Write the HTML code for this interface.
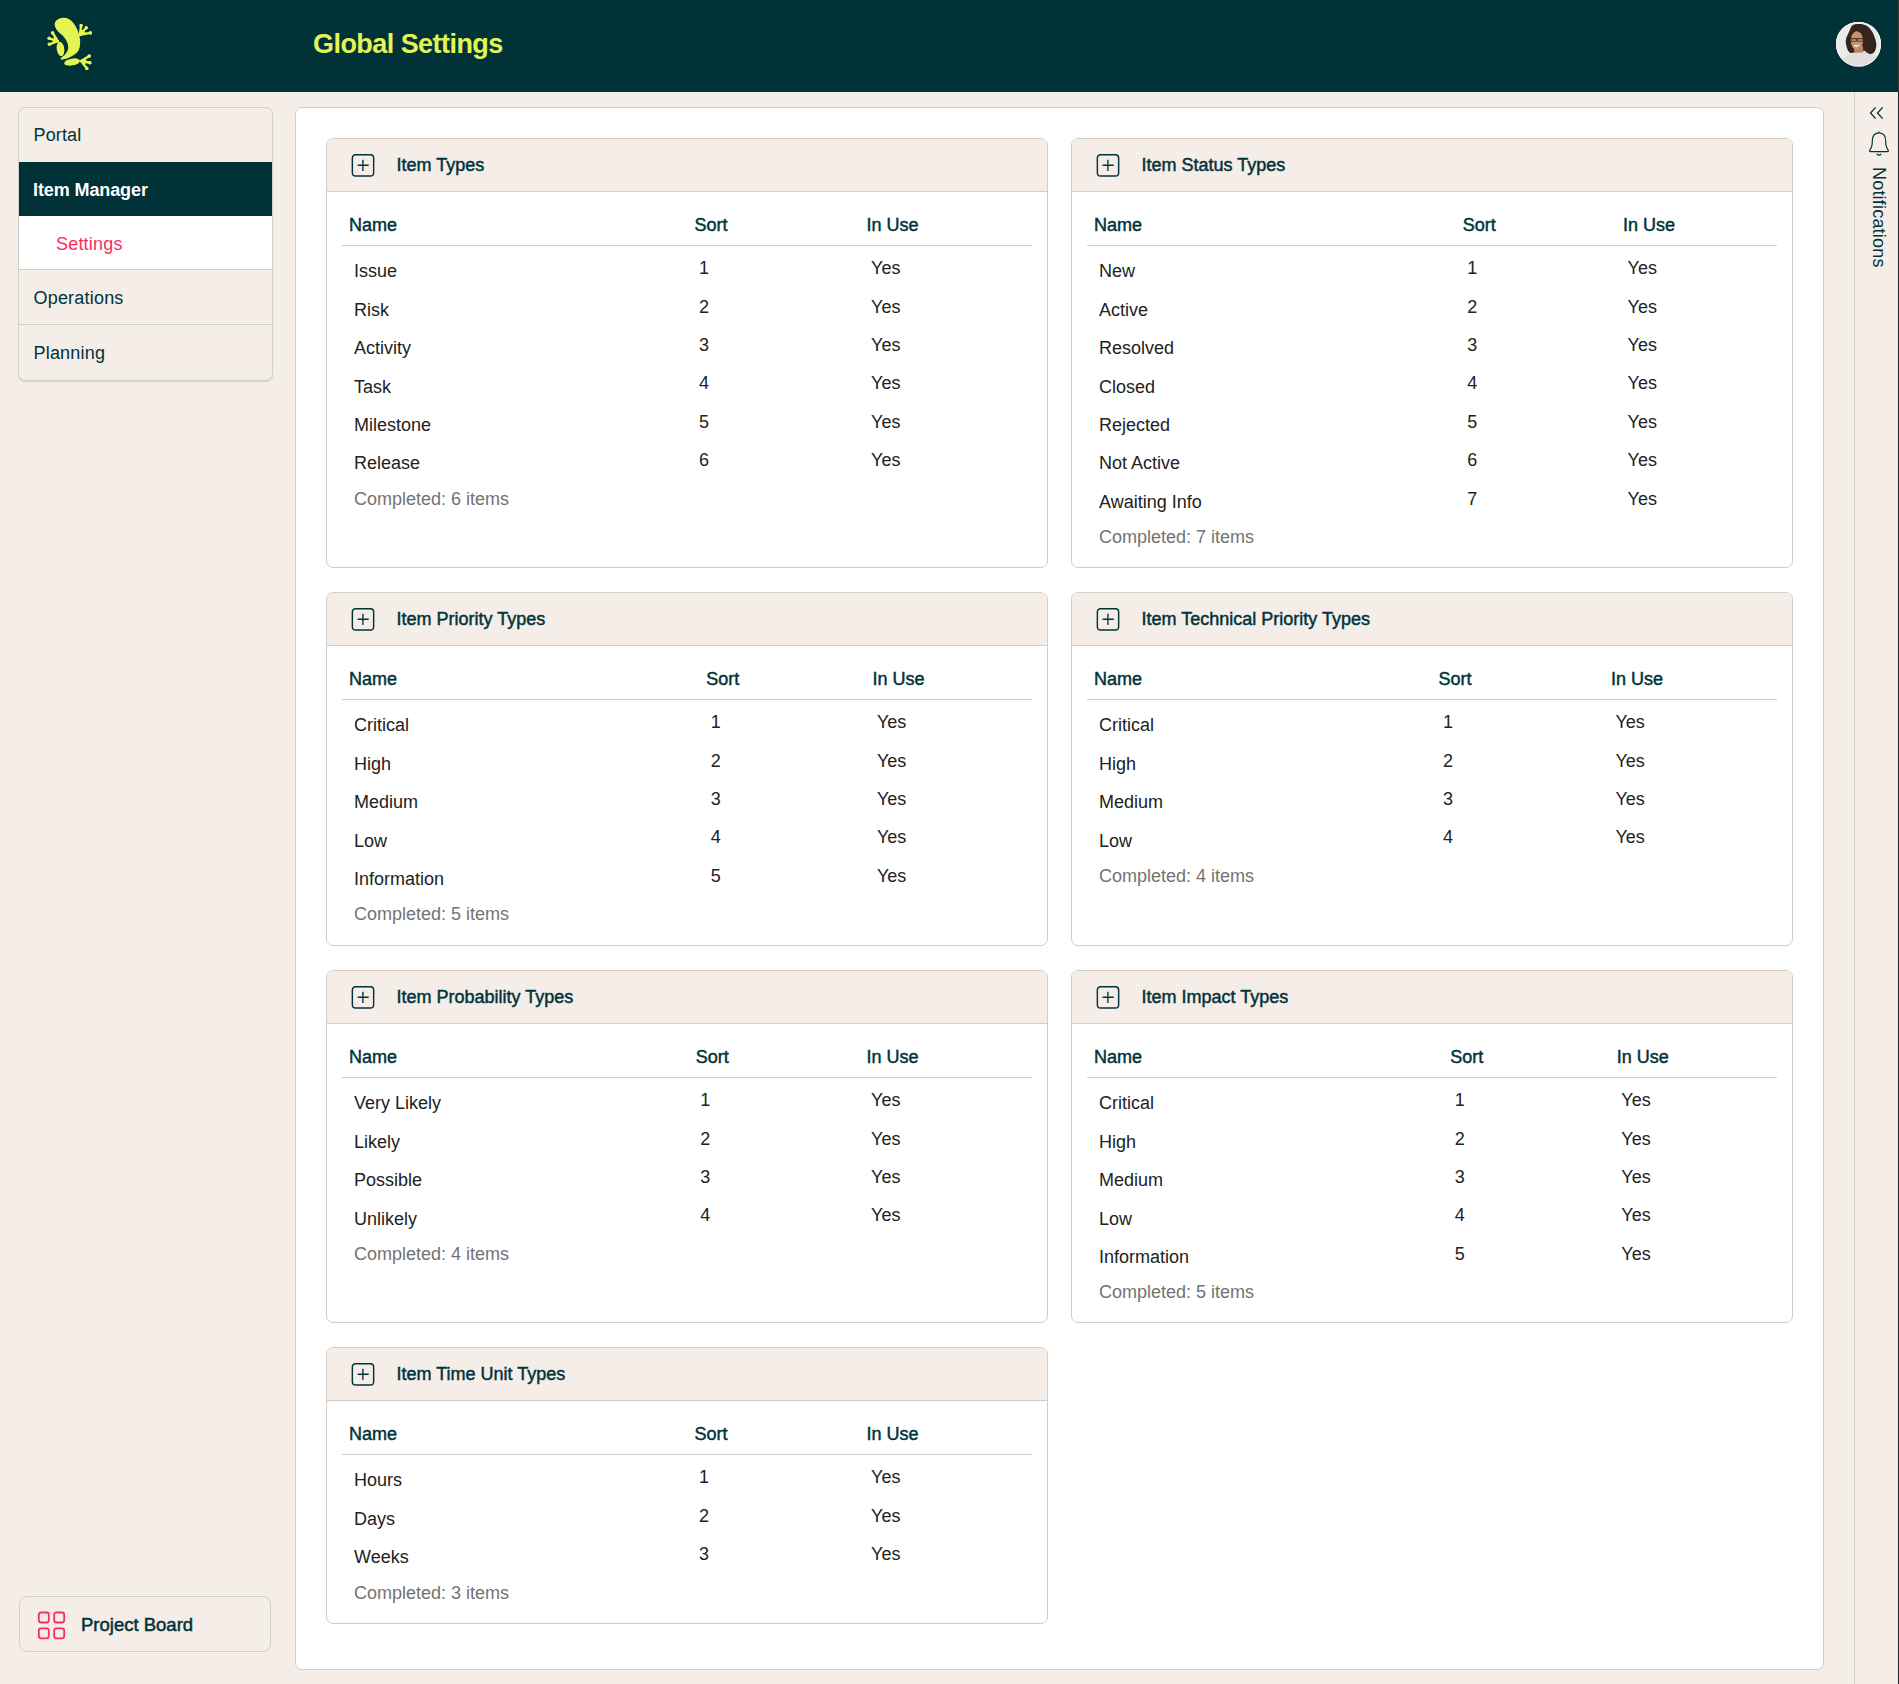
<!DOCTYPE html>
<html><head><meta charset="utf-8"><title>Global Settings</title>
<style>
*{box-sizing:border-box;margin:0;padding:0}
html,body{width:1899px;height:1684px;overflow:hidden;background:#f5ede8;font-family:"Liberation Sans",sans-serif;}
.abs{position:absolute}
.t{position:absolute;white-space:nowrap}
.hdr{position:absolute;left:0;top:0;width:1899px;height:92px;background:#003238}
.logo{position:absolute}
.side{border:1px solid #d3cdc7;border-radius:7px;background:#f5ede8;overflow:hidden;box-shadow:0 1px 1px rgba(0,0,0,0.12)}
.si{position:absolute;left:0;width:100%}
.main{position:absolute;left:295px;top:107px;width:1529px;height:1563px;background:#fff;border:1px solid #d3cdc7;border-radius:7px}
.card{position:absolute;border:1px solid #d3cdc7;border-radius:7px;background:#fff;overflow:hidden}
.ch{position:absolute;left:0;top:0;width:100%;height:53px;background:#f5ede8;border-bottom:1px solid #d3cdc7}
.plus{position:absolute}
.hl{position:absolute;height:1px;background:#d3cdc7}
</style></head><body>
<div class="hdr"></div>
<svg class="logo" style="left:0;top:0" width="120" height="90" viewBox="0 0 120 90">
<g fill="#e4f553">
<path d="M63.7 17.7 C67 17.5 71 19.5 73.8 23.4 C77 28 79.6 33.5 80.1 40 C80.5 46 79.5 50 77 52.5 C74 55.5 68 58.5 63 59.6 C61 60 59.8 59 61 58 C65 55 68.3 51.5 68.2 47 C68 42 65.5 38.5 62 35 C58 31.5 54.8 28.5 54.7 24.5 C54.6 20.5 58.5 17.8 63.7 17.7 Z"/>
<ellipse cx="60.5" cy="49" rx="3.8" ry="7.2" transform="rotate(-8 60.5 49)"/>
<ellipse cx="72.1" cy="62" rx="8" ry="3.4" transform="rotate(-10 72.1 62)"/>
</g>
<path d="M80.00 34.80 L81.10 25.60" stroke="#e4f553" stroke-width="2.4" stroke-linecap="round"/>
<circle cx="81.10" cy="25.60" r="1.8" fill="#e4f553"/>
<path d="M80.00 34.80 L86.30 27.80" stroke="#e4f553" stroke-width="2.4" stroke-linecap="round"/>
<circle cx="86.30" cy="27.80" r="1.8" fill="#e4f553"/>
<path d="M80.00 34.80 L90.30 32.90" stroke="#e4f553" stroke-width="2.4" stroke-linecap="round"/>
<circle cx="90.30" cy="32.90" r="1.8" fill="#e4f553"/>
<path d="M80.00 34.80 L80.55 30.20 L83.15 31.30 L85.15 33.85 Z" fill="#e4f553" stroke="#e4f553" stroke-width="1.6" stroke-linejoin="round"/>
<path d="M57.80 41.20 L52.60 32.90" stroke="#e4f553" stroke-width="2.4" stroke-linecap="round"/>
<circle cx="52.60" cy="32.90" r="1.8" fill="#e4f553"/>
<path d="M57.80 41.20 L49.10 38.30" stroke="#e4f553" stroke-width="2.4" stroke-linecap="round"/>
<circle cx="49.10" cy="38.30" r="1.8" fill="#e4f553"/>
<path d="M57.80 41.20 L49.40 44.30" stroke="#e4f553" stroke-width="2.4" stroke-linecap="round"/>
<circle cx="49.40" cy="44.30" r="1.8" fill="#e4f553"/>
<path d="M57.80 41.20 L55.20 37.05 L53.45 39.75 L53.60 42.75 Z" fill="#e4f553" stroke="#e4f553" stroke-width="1.6" stroke-linejoin="round"/>
<path d="M81.20 61.00 L89.30 56.00" stroke="#e4f553" stroke-width="2.4" stroke-linecap="round"/>
<circle cx="89.30" cy="56.00" r="1.8" fill="#e4f553"/>
<path d="M81.20 61.00 L89.90 62.70" stroke="#e4f553" stroke-width="2.4" stroke-linecap="round"/>
<circle cx="89.90" cy="62.70" r="1.8" fill="#e4f553"/>
<path d="M81.20 61.00 L86.80 68.40" stroke="#e4f553" stroke-width="2.4" stroke-linecap="round"/>
<circle cx="86.80" cy="68.40" r="1.8" fill="#e4f553"/>
<path d="M81.20 61.00 L85.25 58.50 L85.55 61.85 L84.00 64.70 Z" fill="#e4f553" stroke="#e4f553" stroke-width="1.6" stroke-linejoin="round"/>
</svg>
<div class="t" style="left:313.00px;top:31.14px;font-size:27px;line-height:27px;font-weight:700;color:#e4f553;letter-spacing:-0.55px">Global Settings</div>
<div class="abs" style="left:1836.35px;top:22.25px;width:44.2px;height:44.2px;border-radius:50%;overflow:hidden;background:#ebebeb">
<svg style="position:absolute;left:-0.35px;top:-0.25px" width="45" height="45" viewBox="0 0 45 45">
<rect x="-2" y="-2" width="49" height="49" fill="#ebebeb"/>
<path d="M3 46 L5 38 C7 35 12 33 17 31 L22 29.8 L28 30.5 C33 31.5 39 33 42 35 L46 46 Z" fill="#e0deda"/>
<path d="M23.3 1.9 C26 1.9 28.5 2.6 30.2 3.6 C32.5 5 34 6.5 35.3 8.5 C36.8 10.5 37.8 12.5 38.4 14.7 C39.4 17 40.1 19.5 40.2 21.6 C40.4 23.5 40.3 25 39.8 26.7 C39.2 28.7 38.3 30.3 37.1 31.2 C36 31.9 34.8 32.1 33.6 31.9 C31.5 31 29.5 30 28.4 28.8 L18.1 30.5 C17 30.8 15.8 31.1 14.7 30.9 C13.5 30.5 12.5 29.6 11.9 28.4 C11 26.7 10.5 25 10.2 23.3 C9.8 21.5 9.6 19.8 9.8 18.1 C10.2 16 10.9 14 11.9 12.3 C12.8 10.5 13.6 8.8 14.3 7.1 C14.7 6 15 5 15.4 4.3 C16.4 3.2 17.5 2.6 18.8 2.3 C20.3 2 21.8 1.9 23.3 1.9 Z" fill="#33241d"/>
<rect x="18.1" y="24" width="9" height="6.5" fill="#b88063"/>
<ellipse cx="20.9" cy="18.6" rx="6.2" ry="9.3" fill="#c79070"/>
<path d="M14.9 16.6 H26.6" stroke="#4a3328" stroke-width="1"/>
<path d="M15.1 16.6 h5.4 v2.7 h-5.4 z M21.6 16.6 h5 v2.7 h-5 z" fill="none" stroke="#4a3328" stroke-width="0.8"/>
<path d="M18.2 23 Q20.4 25.3 23 23" stroke="#f3efef" stroke-width="1.6" fill="none"/>
</svg></div>
<svg class="abs" style="left:1836px;top:22px" width="45" height="45" viewBox="0 0 45 45"><circle cx="22.45" cy="22.35" r="21.8" fill="none" stroke="#f3f3f3" stroke-width="1.1"/></svg>
<div class="abs side" style="left:18px;top:107px;width:255px;height:274px">
<div class="si" style="top:0;height:54px;"></div>
<div class="si" style="top:54px;height:54px;background:#003238"></div>
<div class="si" style="top:108px;height:54px;background:#fff;border-bottom:1px solid #d3cdc7"></div>
<div class="si" style="top:163px;height:54px;border-bottom:1px solid #d3cdc7"></div>
</div>
<div class="t" style="left:33.50px;top:126.06px;font-size:18px;line-height:18px;font-weight:400;color:#00333a;letter-spacing:0.15px">Portal</div>
<div class="t" style="left:33.00px;top:181.16px;font-size:18px;line-height:18px;font-weight:700;color:#ffffff;letter-spacing:-0.1px">Item Manager</div>
<div class="t" style="left:56.00px;top:234.56px;font-size:18px;line-height:18px;font-weight:400;color:#fb2c5f;letter-spacing:0.2px">Settings</div>
<div class="t" style="left:33.50px;top:288.76px;font-size:18px;line-height:18px;font-weight:400;color:#00333a;letter-spacing:0.2px">Operations</div>
<div class="t" style="left:33.50px;top:343.56px;font-size:18px;line-height:18px;font-weight:400;color:#00333a;letter-spacing:0.2px">Planning</div>
<div class="abs" style="left:19px;top:1596px;width:252px;height:56px;border:1px solid #d3cdc7;border-radius:8px;background:#f5ede8"></div>
<svg class="abs" style="left:36px;top:1610px" width="30" height="30" viewBox="0 0 30 30">
<g fill="none" stroke="#fb2c5f" stroke-width="1.8">
<rect x="2.8" y="2.5" width="10" height="10" rx="2.2"/><rect x="18.2" y="2.5" width="10" height="10" rx="2.2"/>
<rect x="2.8" y="18.3" width="10" height="10" rx="2.2"/><rect x="18.2" y="18.3" width="10" height="10" rx="2.2"/>
</g></svg>
<div class="t" style="left:81.00px;top:1615.54px;font-size:18.5px;line-height:18.5px;font-weight:400;color:#00333a;letter-spacing:0px;-webkit-text-stroke:0.5px #00333a;">Project Board</div>
<div class="main"></div>
<div class="card" style="left:326px;top:138px;width:722px;height:430px"><div class="ch"></div></div>
<svg class="plus" style="left:351px;top:154px" width="24" height="24" viewBox="0 0 24 24"><rect x="1.35" y="0.65" width="21.3" height="21.3" rx="3.3" fill="none" stroke="#00333a" stroke-width="1.45"/><path d="M6.6 11.2H17.7M11.9 5.8V16.9" stroke="#00333a" stroke-width="1.35" fill="none"/></svg>
<div class="t" style="left:396.50px;top:155.76px;font-size:18px;line-height:18px;font-weight:400;color:#00333a;;-webkit-text-stroke:0.45px #00333a;">Item Types</div>
<div class="t" style="left:349.00px;top:215.76px;font-size:18px;line-height:18px;font-weight:400;color:#00333a;;-webkit-text-stroke:0.45px #00333a;">Name</div>
<div class="t" style="left:694.40px;top:215.76px;font-size:18px;line-height:18px;font-weight:400;color:#00333a;;-webkit-text-stroke:0.45px #00333a;">Sort</div>
<div class="t" style="left:866.60px;top:215.76px;font-size:18px;line-height:18px;font-weight:400;color:#00333a;;-webkit-text-stroke:0.45px #00333a;">In Use</div>
<div class="hl" style="left:342px;top:245px;width:690px"></div>
<div class="t" style="left:354.00px;top:262.46px;font-size:18px;line-height:18px;font-weight:400;color:#222222;">Issue</div>
<div class="t" style="left:698.90px;top:259.26px;font-size:18px;line-height:18px;font-weight:400;color:#222222;">1</div>
<div class="t" style="left:871.10px;top:259.26px;font-size:18px;line-height:18px;font-weight:400;color:#222222;">Yes</div>
<div class="t" style="left:354.00px;top:300.86px;font-size:18px;line-height:18px;font-weight:400;color:#222222;">Risk</div>
<div class="t" style="left:698.90px;top:297.66px;font-size:18px;line-height:18px;font-weight:400;color:#222222;">2</div>
<div class="t" style="left:871.10px;top:297.66px;font-size:18px;line-height:18px;font-weight:400;color:#222222;">Yes</div>
<div class="t" style="left:354.00px;top:339.26px;font-size:18px;line-height:18px;font-weight:400;color:#222222;">Activity</div>
<div class="t" style="left:698.90px;top:336.06px;font-size:18px;line-height:18px;font-weight:400;color:#222222;">3</div>
<div class="t" style="left:871.10px;top:336.06px;font-size:18px;line-height:18px;font-weight:400;color:#222222;">Yes</div>
<div class="t" style="left:354.00px;top:377.66px;font-size:18px;line-height:18px;font-weight:400;color:#222222;">Task</div>
<div class="t" style="left:698.90px;top:374.46px;font-size:18px;line-height:18px;font-weight:400;color:#222222;">4</div>
<div class="t" style="left:871.10px;top:374.46px;font-size:18px;line-height:18px;font-weight:400;color:#222222;">Yes</div>
<div class="t" style="left:354.00px;top:416.06px;font-size:18px;line-height:18px;font-weight:400;color:#222222;">Milestone</div>
<div class="t" style="left:698.90px;top:412.86px;font-size:18px;line-height:18px;font-weight:400;color:#222222;">5</div>
<div class="t" style="left:871.10px;top:412.86px;font-size:18px;line-height:18px;font-weight:400;color:#222222;">Yes</div>
<div class="t" style="left:354.00px;top:454.46px;font-size:18px;line-height:18px;font-weight:400;color:#222222;">Release</div>
<div class="t" style="left:698.90px;top:451.26px;font-size:18px;line-height:18px;font-weight:400;color:#222222;">6</div>
<div class="t" style="left:871.10px;top:451.26px;font-size:18px;line-height:18px;font-weight:400;color:#222222;">Yes</div>
<div class="t" style="left:354.00px;top:489.76px;font-size:18px;line-height:18px;font-weight:400;color:#737373;">Completed: 6 items</div><div class="card" style="left:1071px;top:138px;width:722px;height:430px"><div class="ch"></div></div>
<svg class="plus" style="left:1096px;top:154px" width="24" height="24" viewBox="0 0 24 24"><rect x="1.35" y="0.65" width="21.3" height="21.3" rx="3.3" fill="none" stroke="#00333a" stroke-width="1.45"/><path d="M6.6 11.2H17.7M11.9 5.8V16.9" stroke="#00333a" stroke-width="1.35" fill="none"/></svg>
<div class="t" style="left:1141.50px;top:155.76px;font-size:18px;line-height:18px;font-weight:400;color:#00333a;;-webkit-text-stroke:0.45px #00333a;">Item Status Types</div>
<div class="t" style="left:1094.00px;top:215.76px;font-size:18px;line-height:18px;font-weight:400;color:#00333a;;-webkit-text-stroke:0.45px #00333a;">Name</div>
<div class="t" style="left:1462.70px;top:215.76px;font-size:18px;line-height:18px;font-weight:400;color:#00333a;;-webkit-text-stroke:0.45px #00333a;">Sort</div>
<div class="t" style="left:1623.10px;top:215.76px;font-size:18px;line-height:18px;font-weight:400;color:#00333a;;-webkit-text-stroke:0.45px #00333a;">In Use</div>
<div class="hl" style="left:1087px;top:245px;width:690px"></div>
<div class="t" style="left:1099.00px;top:262.46px;font-size:18px;line-height:18px;font-weight:400;color:#222222;">New</div>
<div class="t" style="left:1467.20px;top:259.26px;font-size:18px;line-height:18px;font-weight:400;color:#222222;">1</div>
<div class="t" style="left:1627.60px;top:259.26px;font-size:18px;line-height:18px;font-weight:400;color:#222222;">Yes</div>
<div class="t" style="left:1099.00px;top:300.86px;font-size:18px;line-height:18px;font-weight:400;color:#222222;">Active</div>
<div class="t" style="left:1467.20px;top:297.66px;font-size:18px;line-height:18px;font-weight:400;color:#222222;">2</div>
<div class="t" style="left:1627.60px;top:297.66px;font-size:18px;line-height:18px;font-weight:400;color:#222222;">Yes</div>
<div class="t" style="left:1099.00px;top:339.26px;font-size:18px;line-height:18px;font-weight:400;color:#222222;">Resolved</div>
<div class="t" style="left:1467.20px;top:336.06px;font-size:18px;line-height:18px;font-weight:400;color:#222222;">3</div>
<div class="t" style="left:1627.60px;top:336.06px;font-size:18px;line-height:18px;font-weight:400;color:#222222;">Yes</div>
<div class="t" style="left:1099.00px;top:377.66px;font-size:18px;line-height:18px;font-weight:400;color:#222222;">Closed</div>
<div class="t" style="left:1467.20px;top:374.46px;font-size:18px;line-height:18px;font-weight:400;color:#222222;">4</div>
<div class="t" style="left:1627.60px;top:374.46px;font-size:18px;line-height:18px;font-weight:400;color:#222222;">Yes</div>
<div class="t" style="left:1099.00px;top:416.06px;font-size:18px;line-height:18px;font-weight:400;color:#222222;">Rejected</div>
<div class="t" style="left:1467.20px;top:412.86px;font-size:18px;line-height:18px;font-weight:400;color:#222222;">5</div>
<div class="t" style="left:1627.60px;top:412.86px;font-size:18px;line-height:18px;font-weight:400;color:#222222;">Yes</div>
<div class="t" style="left:1099.00px;top:454.46px;font-size:18px;line-height:18px;font-weight:400;color:#222222;">Not Active</div>
<div class="t" style="left:1467.20px;top:451.26px;font-size:18px;line-height:18px;font-weight:400;color:#222222;">6</div>
<div class="t" style="left:1627.60px;top:451.26px;font-size:18px;line-height:18px;font-weight:400;color:#222222;">Yes</div>
<div class="t" style="left:1099.00px;top:492.86px;font-size:18px;line-height:18px;font-weight:400;color:#222222;">Awaiting Info</div>
<div class="t" style="left:1467.20px;top:489.66px;font-size:18px;line-height:18px;font-weight:400;color:#222222;">7</div>
<div class="t" style="left:1627.60px;top:489.66px;font-size:18px;line-height:18px;font-weight:400;color:#222222;">Yes</div>
<div class="t" style="left:1099.00px;top:528.16px;font-size:18px;line-height:18px;font-weight:400;color:#737373;">Completed: 7 items</div><div class="card" style="left:326px;top:592px;width:722px;height:354px"><div class="ch"></div></div>
<svg class="plus" style="left:351px;top:608px" width="24" height="24" viewBox="0 0 24 24"><rect x="1.35" y="0.65" width="21.3" height="21.3" rx="3.3" fill="none" stroke="#00333a" stroke-width="1.45"/><path d="M6.6 11.2H17.7M11.9 5.8V16.9" stroke="#00333a" stroke-width="1.35" fill="none"/></svg>
<div class="t" style="left:396.50px;top:609.76px;font-size:18px;line-height:18px;font-weight:400;color:#00333a;;-webkit-text-stroke:0.45px #00333a;">Item Priority Types</div>
<div class="t" style="left:349.00px;top:669.76px;font-size:18px;line-height:18px;font-weight:400;color:#00333a;;-webkit-text-stroke:0.45px #00333a;">Name</div>
<div class="t" style="left:706.20px;top:669.76px;font-size:18px;line-height:18px;font-weight:400;color:#00333a;;-webkit-text-stroke:0.45px #00333a;">Sort</div>
<div class="t" style="left:872.50px;top:669.76px;font-size:18px;line-height:18px;font-weight:400;color:#00333a;;-webkit-text-stroke:0.45px #00333a;">In Use</div>
<div class="hl" style="left:342px;top:699px;width:690px"></div>
<div class="t" style="left:354.00px;top:716.46px;font-size:18px;line-height:18px;font-weight:400;color:#222222;">Critical</div>
<div class="t" style="left:710.70px;top:713.26px;font-size:18px;line-height:18px;font-weight:400;color:#222222;">1</div>
<div class="t" style="left:877.00px;top:713.26px;font-size:18px;line-height:18px;font-weight:400;color:#222222;">Yes</div>
<div class="t" style="left:354.00px;top:754.86px;font-size:18px;line-height:18px;font-weight:400;color:#222222;">High</div>
<div class="t" style="left:710.70px;top:751.66px;font-size:18px;line-height:18px;font-weight:400;color:#222222;">2</div>
<div class="t" style="left:877.00px;top:751.66px;font-size:18px;line-height:18px;font-weight:400;color:#222222;">Yes</div>
<div class="t" style="left:354.00px;top:793.26px;font-size:18px;line-height:18px;font-weight:400;color:#222222;">Medium</div>
<div class="t" style="left:710.70px;top:790.06px;font-size:18px;line-height:18px;font-weight:400;color:#222222;">3</div>
<div class="t" style="left:877.00px;top:790.06px;font-size:18px;line-height:18px;font-weight:400;color:#222222;">Yes</div>
<div class="t" style="left:354.00px;top:831.66px;font-size:18px;line-height:18px;font-weight:400;color:#222222;">Low</div>
<div class="t" style="left:710.70px;top:828.46px;font-size:18px;line-height:18px;font-weight:400;color:#222222;">4</div>
<div class="t" style="left:877.00px;top:828.46px;font-size:18px;line-height:18px;font-weight:400;color:#222222;">Yes</div>
<div class="t" style="left:354.00px;top:870.06px;font-size:18px;line-height:18px;font-weight:400;color:#222222;">Information</div>
<div class="t" style="left:710.70px;top:866.86px;font-size:18px;line-height:18px;font-weight:400;color:#222222;">5</div>
<div class="t" style="left:877.00px;top:866.86px;font-size:18px;line-height:18px;font-weight:400;color:#222222;">Yes</div>
<div class="t" style="left:354.00px;top:905.36px;font-size:18px;line-height:18px;font-weight:400;color:#737373;">Completed: 5 items</div><div class="card" style="left:1071px;top:592px;width:722px;height:354px"><div class="ch"></div></div>
<svg class="plus" style="left:1096px;top:608px" width="24" height="24" viewBox="0 0 24 24"><rect x="1.35" y="0.65" width="21.3" height="21.3" rx="3.3" fill="none" stroke="#00333a" stroke-width="1.45"/><path d="M6.6 11.2H17.7M11.9 5.8V16.9" stroke="#00333a" stroke-width="1.35" fill="none"/></svg>
<div class="t" style="left:1141.50px;top:609.76px;font-size:18px;line-height:18px;font-weight:400;color:#00333a;;-webkit-text-stroke:0.45px #00333a;">Item Technical Priority Types</div>
<div class="t" style="left:1094.00px;top:669.76px;font-size:18px;line-height:18px;font-weight:400;color:#00333a;;-webkit-text-stroke:0.45px #00333a;">Name</div>
<div class="t" style="left:1438.50px;top:669.76px;font-size:18px;line-height:18px;font-weight:400;color:#00333a;;-webkit-text-stroke:0.45px #00333a;">Sort</div>
<div class="t" style="left:1611.00px;top:669.76px;font-size:18px;line-height:18px;font-weight:400;color:#00333a;;-webkit-text-stroke:0.45px #00333a;">In Use</div>
<div class="hl" style="left:1087px;top:699px;width:690px"></div>
<div class="t" style="left:1099.00px;top:716.46px;font-size:18px;line-height:18px;font-weight:400;color:#222222;">Critical</div>
<div class="t" style="left:1443.00px;top:713.26px;font-size:18px;line-height:18px;font-weight:400;color:#222222;">1</div>
<div class="t" style="left:1615.50px;top:713.26px;font-size:18px;line-height:18px;font-weight:400;color:#222222;">Yes</div>
<div class="t" style="left:1099.00px;top:754.86px;font-size:18px;line-height:18px;font-weight:400;color:#222222;">High</div>
<div class="t" style="left:1443.00px;top:751.66px;font-size:18px;line-height:18px;font-weight:400;color:#222222;">2</div>
<div class="t" style="left:1615.50px;top:751.66px;font-size:18px;line-height:18px;font-weight:400;color:#222222;">Yes</div>
<div class="t" style="left:1099.00px;top:793.26px;font-size:18px;line-height:18px;font-weight:400;color:#222222;">Medium</div>
<div class="t" style="left:1443.00px;top:790.06px;font-size:18px;line-height:18px;font-weight:400;color:#222222;">3</div>
<div class="t" style="left:1615.50px;top:790.06px;font-size:18px;line-height:18px;font-weight:400;color:#222222;">Yes</div>
<div class="t" style="left:1099.00px;top:831.66px;font-size:18px;line-height:18px;font-weight:400;color:#222222;">Low</div>
<div class="t" style="left:1443.00px;top:828.46px;font-size:18px;line-height:18px;font-weight:400;color:#222222;">4</div>
<div class="t" style="left:1615.50px;top:828.46px;font-size:18px;line-height:18px;font-weight:400;color:#222222;">Yes</div>
<div class="t" style="left:1099.00px;top:866.96px;font-size:18px;line-height:18px;font-weight:400;color:#737373;">Completed: 4 items</div><div class="card" style="left:326px;top:970px;width:722px;height:353px"><div class="ch"></div></div>
<svg class="plus" style="left:351px;top:986px" width="24" height="24" viewBox="0 0 24 24"><rect x="1.35" y="0.65" width="21.3" height="21.3" rx="3.3" fill="none" stroke="#00333a" stroke-width="1.45"/><path d="M6.6 11.2H17.7M11.9 5.8V16.9" stroke="#00333a" stroke-width="1.35" fill="none"/></svg>
<div class="t" style="left:396.50px;top:987.76px;font-size:18px;line-height:18px;font-weight:400;color:#00333a;;-webkit-text-stroke:0.45px #00333a;">Item Probability Types</div>
<div class="t" style="left:349.00px;top:1047.76px;font-size:18px;line-height:18px;font-weight:400;color:#00333a;;-webkit-text-stroke:0.45px #00333a;">Name</div>
<div class="t" style="left:695.70px;top:1047.76px;font-size:18px;line-height:18px;font-weight:400;color:#00333a;;-webkit-text-stroke:0.45px #00333a;">Sort</div>
<div class="t" style="left:866.60px;top:1047.76px;font-size:18px;line-height:18px;font-weight:400;color:#00333a;;-webkit-text-stroke:0.45px #00333a;">In Use</div>
<div class="hl" style="left:342px;top:1077px;width:690px"></div>
<div class="t" style="left:354.00px;top:1094.46px;font-size:18px;line-height:18px;font-weight:400;color:#222222;">Very Likely</div>
<div class="t" style="left:700.20px;top:1091.26px;font-size:18px;line-height:18px;font-weight:400;color:#222222;">1</div>
<div class="t" style="left:871.10px;top:1091.26px;font-size:18px;line-height:18px;font-weight:400;color:#222222;">Yes</div>
<div class="t" style="left:354.00px;top:1132.86px;font-size:18px;line-height:18px;font-weight:400;color:#222222;">Likely</div>
<div class="t" style="left:700.20px;top:1129.66px;font-size:18px;line-height:18px;font-weight:400;color:#222222;">2</div>
<div class="t" style="left:871.10px;top:1129.66px;font-size:18px;line-height:18px;font-weight:400;color:#222222;">Yes</div>
<div class="t" style="left:354.00px;top:1171.26px;font-size:18px;line-height:18px;font-weight:400;color:#222222;">Possible</div>
<div class="t" style="left:700.20px;top:1168.06px;font-size:18px;line-height:18px;font-weight:400;color:#222222;">3</div>
<div class="t" style="left:871.10px;top:1168.06px;font-size:18px;line-height:18px;font-weight:400;color:#222222;">Yes</div>
<div class="t" style="left:354.00px;top:1209.66px;font-size:18px;line-height:18px;font-weight:400;color:#222222;">Unlikely</div>
<div class="t" style="left:700.20px;top:1206.46px;font-size:18px;line-height:18px;font-weight:400;color:#222222;">4</div>
<div class="t" style="left:871.10px;top:1206.46px;font-size:18px;line-height:18px;font-weight:400;color:#222222;">Yes</div>
<div class="t" style="left:354.00px;top:1244.96px;font-size:18px;line-height:18px;font-weight:400;color:#737373;">Completed: 4 items</div><div class="card" style="left:1071px;top:970px;width:722px;height:353px"><div class="ch"></div></div>
<svg class="plus" style="left:1096px;top:986px" width="24" height="24" viewBox="0 0 24 24"><rect x="1.35" y="0.65" width="21.3" height="21.3" rx="3.3" fill="none" stroke="#00333a" stroke-width="1.45"/><path d="M6.6 11.2H17.7M11.9 5.8V16.9" stroke="#00333a" stroke-width="1.35" fill="none"/></svg>
<div class="t" style="left:1141.50px;top:987.76px;font-size:18px;line-height:18px;font-weight:400;color:#00333a;;-webkit-text-stroke:0.45px #00333a;">Item Impact Types</div>
<div class="t" style="left:1094.00px;top:1047.76px;font-size:18px;line-height:18px;font-weight:400;color:#00333a;;-webkit-text-stroke:0.45px #00333a;">Name</div>
<div class="t" style="left:1450.20px;top:1047.76px;font-size:18px;line-height:18px;font-weight:400;color:#00333a;;-webkit-text-stroke:0.45px #00333a;">Sort</div>
<div class="t" style="left:1616.80px;top:1047.76px;font-size:18px;line-height:18px;font-weight:400;color:#00333a;;-webkit-text-stroke:0.45px #00333a;">In Use</div>
<div class="hl" style="left:1087px;top:1077px;width:690px"></div>
<div class="t" style="left:1099.00px;top:1094.46px;font-size:18px;line-height:18px;font-weight:400;color:#222222;">Critical</div>
<div class="t" style="left:1454.70px;top:1091.26px;font-size:18px;line-height:18px;font-weight:400;color:#222222;">1</div>
<div class="t" style="left:1621.30px;top:1091.26px;font-size:18px;line-height:18px;font-weight:400;color:#222222;">Yes</div>
<div class="t" style="left:1099.00px;top:1132.86px;font-size:18px;line-height:18px;font-weight:400;color:#222222;">High</div>
<div class="t" style="left:1454.70px;top:1129.66px;font-size:18px;line-height:18px;font-weight:400;color:#222222;">2</div>
<div class="t" style="left:1621.30px;top:1129.66px;font-size:18px;line-height:18px;font-weight:400;color:#222222;">Yes</div>
<div class="t" style="left:1099.00px;top:1171.26px;font-size:18px;line-height:18px;font-weight:400;color:#222222;">Medium</div>
<div class="t" style="left:1454.70px;top:1168.06px;font-size:18px;line-height:18px;font-weight:400;color:#222222;">3</div>
<div class="t" style="left:1621.30px;top:1168.06px;font-size:18px;line-height:18px;font-weight:400;color:#222222;">Yes</div>
<div class="t" style="left:1099.00px;top:1209.66px;font-size:18px;line-height:18px;font-weight:400;color:#222222;">Low</div>
<div class="t" style="left:1454.70px;top:1206.46px;font-size:18px;line-height:18px;font-weight:400;color:#222222;">4</div>
<div class="t" style="left:1621.30px;top:1206.46px;font-size:18px;line-height:18px;font-weight:400;color:#222222;">Yes</div>
<div class="t" style="left:1099.00px;top:1248.06px;font-size:18px;line-height:18px;font-weight:400;color:#222222;">Information</div>
<div class="t" style="left:1454.70px;top:1244.86px;font-size:18px;line-height:18px;font-weight:400;color:#222222;">5</div>
<div class="t" style="left:1621.30px;top:1244.86px;font-size:18px;line-height:18px;font-weight:400;color:#222222;">Yes</div>
<div class="t" style="left:1099.00px;top:1283.36px;font-size:18px;line-height:18px;font-weight:400;color:#737373;">Completed: 5 items</div><div class="card" style="left:326px;top:1347px;width:722px;height:277px"><div class="ch"></div></div>
<svg class="plus" style="left:351px;top:1363px" width="24" height="24" viewBox="0 0 24 24"><rect x="1.35" y="0.65" width="21.3" height="21.3" rx="3.3" fill="none" stroke="#00333a" stroke-width="1.45"/><path d="M6.6 11.2H17.7M11.9 5.8V16.9" stroke="#00333a" stroke-width="1.35" fill="none"/></svg>
<div class="t" style="left:396.50px;top:1364.76px;font-size:18px;line-height:18px;font-weight:400;color:#00333a;;-webkit-text-stroke:0.45px #00333a;">Item Time Unit Types</div>
<div class="t" style="left:349.00px;top:1424.76px;font-size:18px;line-height:18px;font-weight:400;color:#00333a;;-webkit-text-stroke:0.45px #00333a;">Name</div>
<div class="t" style="left:694.50px;top:1424.76px;font-size:18px;line-height:18px;font-weight:400;color:#00333a;;-webkit-text-stroke:0.45px #00333a;">Sort</div>
<div class="t" style="left:866.60px;top:1424.76px;font-size:18px;line-height:18px;font-weight:400;color:#00333a;;-webkit-text-stroke:0.45px #00333a;">In Use</div>
<div class="hl" style="left:342px;top:1454px;width:690px"></div>
<div class="t" style="left:354.00px;top:1471.46px;font-size:18px;line-height:18px;font-weight:400;color:#222222;">Hours</div>
<div class="t" style="left:699.00px;top:1468.26px;font-size:18px;line-height:18px;font-weight:400;color:#222222;">1</div>
<div class="t" style="left:871.10px;top:1468.26px;font-size:18px;line-height:18px;font-weight:400;color:#222222;">Yes</div>
<div class="t" style="left:354.00px;top:1509.86px;font-size:18px;line-height:18px;font-weight:400;color:#222222;">Days</div>
<div class="t" style="left:699.00px;top:1506.66px;font-size:18px;line-height:18px;font-weight:400;color:#222222;">2</div>
<div class="t" style="left:871.10px;top:1506.66px;font-size:18px;line-height:18px;font-weight:400;color:#222222;">Yes</div>
<div class="t" style="left:354.00px;top:1548.26px;font-size:18px;line-height:18px;font-weight:400;color:#222222;">Weeks</div>
<div class="t" style="left:699.00px;top:1545.06px;font-size:18px;line-height:18px;font-weight:400;color:#222222;">3</div>
<div class="t" style="left:871.10px;top:1545.06px;font-size:18px;line-height:18px;font-weight:400;color:#222222;">Yes</div>
<div class="t" style="left:354.00px;top:1583.56px;font-size:18px;line-height:18px;font-weight:400;color:#737373;">Completed: 3 items</div>
<div class="abs" style="left:1854px;top:92px;width:1px;height:1592px;background:#d3cdc7"></div>
<div class="abs" style="left:1898px;top:0;width:1px;height:92px;background:#3a3637"></div><div class="abs" style="left:1898px;top:92px;width:1px;height:1592px;background:#1f2022"></div>
<svg class="abs" style="left:1866px;top:104px" width="20" height="18" viewBox="0 0 20 18">
<path d="M9.6 3.4 L4.5 9 L9.6 14.6 M16.6 3.4 L11.5 9 L16.6 14.6" stroke="#00333a" stroke-width="1.3" fill="none"/>
</svg>
<svg class="abs" style="left:1866px;top:129px" width="26" height="30" viewBox="0 0 26 30">
<path d="M13 3.8 C8.2 3.8 6.3 7.5 6.3 12 C6.3 16 6 18 4.3 20.3 C3 22 3.5 22.6 5 22.6 L21 22.6 C22.5 22.6 23 22 21.7 20.3 C20 18 19.7 16 19.7 12 C19.7 7.5 17.8 3.8 13 3.8 Z M13 2.5 V3.8 M10.8 25 Q13 27.3 15.2 25" stroke="#00333a" stroke-width="1.2" fill="none"/>
</svg>
<div class="t" style="left:1888px;top:166.5px;font-size:18px;line-height:18px;color:#00333a;transform-origin:0 0;transform:rotate(90deg);letter-spacing:0.2px">Notifications</div>
</body></html>
